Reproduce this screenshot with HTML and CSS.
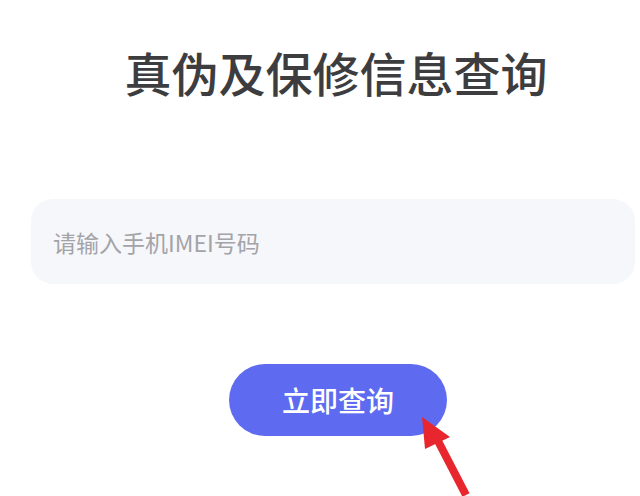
FILE: index.html
```html
<!DOCTYPE html>
<html lang="zh-CN">
<head>
    <meta charset="UTF-8">
    <meta name="viewport" content="width=device-width, initial-scale=1.0">
    <title>真伪及保修信息查询</title>
    <link rel="stylesheet" href="styles.css">
</head>
<body>
    <div class="page">
        <h1 class="title">真伪及保修信息查询</h1>

        <div class="imei-box">
            <input type="text" class="imei-input" placeholder="请输入手机IMEI号码">
        </div>

        <div class="actions">
            <button type="button" class="query-btn">立即查询</button>
            <svg class="pointer" width="70" height="90" viewBox="0 0 70 90">
                <line x1="22" y1="26" x2="50" y2="80" stroke="#e8262d" stroke-width="8" stroke-linecap="butt"/>
                <polygon points="6,2 9,34 34,22" fill="#e8262d"/>
            </svg>
        </div>
    </div>
</body>
</html>
```

FILE: styles.css
```css
body {
    margin: 0;
    background-color: #fff;
    font-family: "Noto Sans CJK SC", "Noto Sans", sans-serif;
}

.page {
    display: flex;
    flex-direction: column;
    padding: 0 5px 0 31px;
    height: 496px;
    overflow: hidden;
}

.title {
    margin: 40px 0 0 6px;
    text-align: center;
    font-size: 47px;
    font-weight: 500;
    line-height: 64px;
    color: #3d3d40;
}

.imei-box {
    margin-top: 95px;
    height: 85px;
    background-color: #f6f7fa;
    border-radius: 22px;
    display: flex;
    align-items: center;
}

.imei-input {
    flex: 1;
    border: none;
    background: transparent;
    padding: 0 0 0 22px;
    font-family: inherit;
    font-size: 23px;
    color: #333;
    outline: none;
}

.imei-input::placeholder {
    color: #a3a3a8;
}

.actions {
    position: relative;
    display: flex;
    justify-content: center;
    margin-top: 80px;
    padding-left: 10px;
}

.query-btn {
    width: 218px;
    height: 72px;
    border: none;
    border-radius: 36px;
    background-color: #5e6bf1;
    color: #fff;
    font-family: inherit;
    font-size: 28px;
    font-weight: 500;
    cursor: pointer;
}

.pointer {
    position: absolute;
    left: 385px;
    top: 51px;
}
```
